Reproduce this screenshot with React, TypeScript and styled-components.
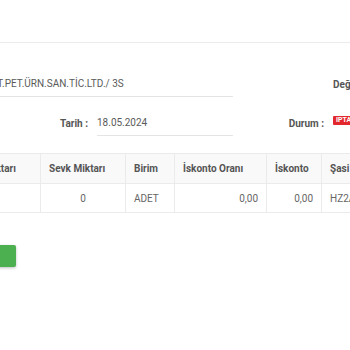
import React from 'react'
import styled, { createGlobalStyle } from 'styled-components'

const GlobalStyle = createGlobalStyle`
  html, body {
    margin: 0;
    padding: 0;
    background: #fff;
    overflow: hidden;
  }
  body {
    font-family: Roboto, "Liberation Sans", sans-serif;
    color: #555;
    font-size: 10px;
  }
`

const Page = styled.div`
  width: 350px;
  height: 350px;
  overflow: hidden;
`

const CardHeader = styled.div`
  height: 42px;
  border-bottom: 1px solid #ececec;
`

const Form = styled.div`
  display: flex;
  flex-direction: column;
  gap: 11px;
  padding-top: 27px;
`

const FormRow = styled.div`
  display: flex;
  align-items: center;
  height: 28px;
`

const Label = styled.div<{ width: number }>`
  flex: 0 0 auto;
  width: ${({ width }) => `${width}px`};
  text-align: right;
  font-weight: 700;
  color: #555;
  white-space: nowrap;
  padding-right: 9px;
  box-sizing: border-box;
`

const Field = styled.div<{ width: number; offset?: number }>`
  flex: 0 0 auto;
  width: ${({ width }) => `${width}px`};
  margin-left: ${({ offset = 0 }) => `${offset}px`};
  height: 26px;
  line-height: 26px;
  border-bottom: 1px solid #e4e4e4;
  color: #5a5a5a;
  white-space: nowrap;
  overflow: hidden;
  box-sizing: border-box;
`

const SideLabel = styled.div`
  margin-left: auto;
  font-weight: 700;
  white-space: nowrap;
  width: 17px;
  overflow: hidden;
`

const StatusValue = styled.div`
  flex: 0 0 auto;
  width: 17px;
  overflow: hidden;
  display: flex;
  align-items: center;
  height: 100%;
  padding-bottom: 5px;
  box-sizing: border-box;
`

const StatusBadge = styled.span`
  display: inline-block;
  background: #e2272d;
  color: #fff;
  font-size: 7px;
  font-weight: 700;
  line-height: 9px;
  padding: 0 3px;
  border-radius: 1px;
  white-space: nowrap;
`

const TableWrap = styled.div`
  margin-top: 16px;
  margin-left: -25px;
`

const Table = styled.table`
  border-collapse: collapse;
  table-layout: fixed;
`

const Th = styled.th`
  box-sizing: border-box;
  height: 30px;
  padding: 0 8px;
  text-align: left;
  font-weight: 700;
  font-size: 10px;
  color: #555;
  background: #f9f9f9;
  border: 1px solid #ebebeb;
  white-space: nowrap;
  overflow: hidden;
`

const Td = styled.td<{ align?: 'left' | 'right' | 'center' }>`
  box-sizing: border-box;
  height: 29px;
  padding: 0 8px;
  text-align: ${({ align = 'left' }) => align};
  color: #666;
  font-size: 10px;
  border: 1px solid #ebebeb;
  white-space: nowrap;
  overflow: hidden;
`

const Actions = styled.div`
  margin-top: 32px;
  margin-left: -20px;
`

const SaveButton = styled.button`
  display: block;
  width: 36px;
  height: 22px;
  border: none;
  border-radius: 2px;
  background: #4caf50;
  box-shadow: 0 1px 3px rgba(0, 0, 0, 0.25);
`

const columns = [
  { title: 'Miktarı', width: 65 },
  { title: 'Sevk Miktarı', width: 85 },
  { title: 'Birim', width: 49 },
  { title: 'İskonto Oranı', width: 92 },
  { title: 'İskonto', width: 55 },
  { title: 'Şasi No', width: 100 },
]

const tableWidth = columns.reduce((sum, c) => sum + c.width, 0)

export default function App() {
  return (
    <Page>
      <GlobalStyle />
      <CardHeader />
      <Form>
        <FormRow>
          <Field width={282} offset={-49}>
            AKARYAKIT.PET.ÜRN.SAN.TİC.LTD./ 3S
          </Field>
          <SideLabel>Değiştiren :</SideLabel>
        </FormRow>
        <FormRow>
          <Label width={97}>Tarih :</Label>
          <Field width={136}>18.05.2024</Field>
          <Label width={100}>Durum :</Label>
          <StatusValue>
            <StatusBadge>İPTAL</StatusBadge>
          </StatusValue>
        </FormRow>
      </Form>
      <TableWrap>
        <Table style={{ width: tableWidth }}>
          <colgroup>
            {columns.map((c) => (
              <col key={c.title} style={{ width: c.width }} />
            ))}
          </colgroup>
          <thead>
            <tr>
              {columns.map((c) => (
                <Th key={c.title}>{c.title}</Th>
              ))}
            </tr>
          </thead>
          <tbody>
            <tr>
              <Td align="right" />
              <Td align="center">0</Td>
              <Td>ADET</Td>
              <Td align="right">0,00</Td>
              <Td align="right">0,00</Td>
              <Td>HZ2A0001</Td>
            </tr>
          </tbody>
        </Table>
      </TableWrap>
      <Actions>
        <SaveButton aria-label="Kaydet" />
      </Actions>
    </Page>
  )
}
